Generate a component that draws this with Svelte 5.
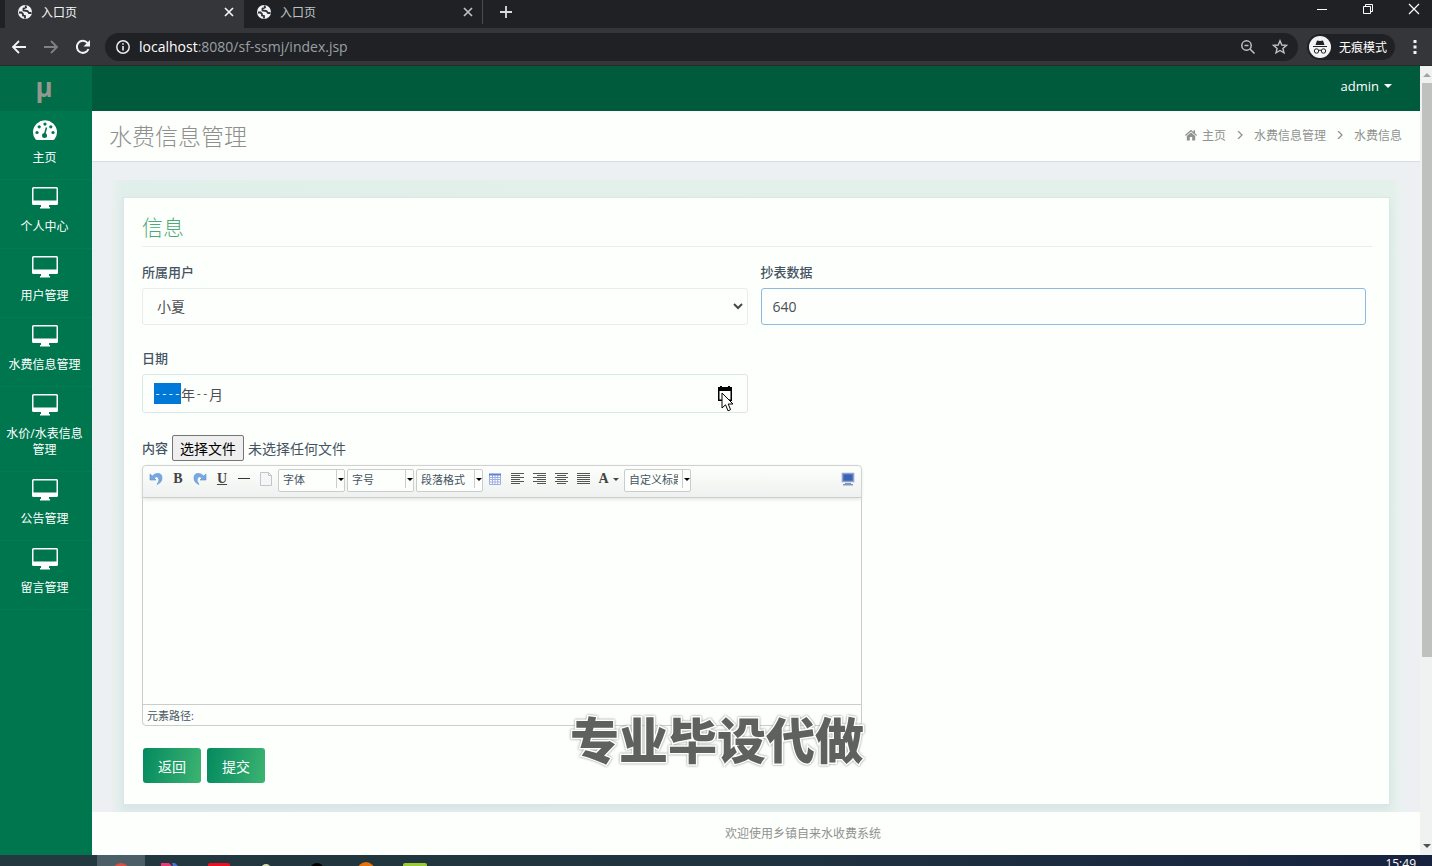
<script lang="ts">
  const tabs = [
    { title: '入口页', active: true },
    { title: '入口页', active: false }
  ];

  const menu = [
    { label: '主页', icon: 'gauge' },
    { label: '个人中心', icon: 'desktop' },
    { label: '用户管理', icon: 'desktop' },
    { label: '水费信息管理', icon: 'desktop' },
    { label: '水价/水表信息管理', icon: 'desktop' },
    { label: '公告管理', icon: 'desktop' },
    { label: '留言管理', icon: 'desktop' }
  ];

  const combos = ['字体', '字号', '段落格式'];

  // line ends of the four alignment icons
  const aligns = [
    { name: '左对齐', d: 'M1 1.500h13M1 3.500h9M1 5.500h13M1 7.500h9M1 9.500h13M1 11.500h9' },
    { name: '右对齐', d: 'M1 1.500h13M5 3.500h9M1 5.500h13M5 7.500h9M1 9.500h13M5 11.500h9' },
    { name: '居中', d: 'M1 1.500h13M3 3.500h9M1 5.500h13M3 7.500h9M1 9.500h13M3 11.500h9' },
    { name: '两端对齐', d: 'M1 1.500h13M1 3.500h13M1 5.500h13M1 7.500h13M1 9.500h13M1 11.500h13' }
  ];

  let reading = '640';
  let year = '----';
  let month = '--';
  let content = '';
  let fileName = '未选择任何文件';
  let fileInput: HTMLInputElement;

  const handleFile = () => {
    fileName = fileInput.files?.[0]?.name ?? '未选择任何文件';
  };
</script>

<div class="screen">
  <div class="tabstrip">
    {#each tabs as tab}
      <div class="tab" class:tab--active={tab.active}>
        <svg width="16" height="16" viewBox="0 0 16 16">
          <circle cx="8" cy="8" r="7" fill="#f1f3f4" />
          <path d="M2 8.500 4.500 8.500 6 10v1.500l2 .5v2.500M8.500 1.500 9 3.500 6.500 4.500v2l4 .5 1.500 2h2.500" fill="none" stroke="#303134" stroke-width="1.800" />
        </svg>
        <span class="tab-title">{tab.title}</span>
        <button class="plain" aria-label="关闭标签页">
          <svg width="10" height="10" viewBox="0 0 10 10"><path d="M1 1l8 8M9 1l-8 8" stroke="currentColor" stroke-width="1.700" /></svg>
        </button>
      </div>
    {/each}
    <button class="plain new-tab" aria-label="新标签页">
      <svg width="12" height="12" viewBox="0 0 12 12"><path d="M6 0v12M0 6h12" stroke="#dadce0" stroke-width="1.800" /></svg>
    </button>
    <div class="window-controls">
      <button class="plain" aria-label="最小化">
        <svg width="12" height="12" viewBox="0 0 12 12"><path d="M1 6.500h10" stroke="#fff" /></svg>
      </button>
      <button class="plain" aria-label="还原">
        <svg width="12" height="12" viewBox="0 0 12 12"><path d="M1.500 3.500h7v7h-7zM3.500 3.500v-2h7v7h-2" fill="none" stroke="#fff" /></svg>
      </button>
      <button class="plain" aria-label="关闭">
        <svg width="12" height="12" viewBox="0 0 12 12"><path d="M1 1l10 10M11 1 1 11" stroke="#fff" stroke-width="1.200" /></svg>
      </button>
    </div>
  </div>

  <div class="navbar">
    <button class="plain nav-button" aria-label="后退">
      <svg width="16" height="16" viewBox="0 0 16 16"><path d="M15 8H2M8 2 2 8l6 6" fill="none" stroke="#f1f3f4" stroke-width="1.800" /></svg>
    </button>
    <button class="plain nav-button" aria-label="前进">
      <svg width="16" height="16" viewBox="0 0 16 16"><path d="M1 8h13M8 2l6 6-6 6" fill="none" stroke="#808185" stroke-width="1.800" /></svg>
    </button>
    <button class="plain nav-button" aria-label="重新加载">
      <svg width="16" height="16" viewBox="0 0 16 16"><path d="M13.500 10A6 6 0 1 1 12.500 4" fill="none" stroke="#f1f3f4" stroke-width="2" /><path d="M15 1v6.500H8.500z" fill="#f1f3f4" /></svg>
    </button>
    <div class="omnibox">
      <svg width="16" height="16" viewBox="0 0 16 16"><circle cx="8" cy="8" r="6.200" fill="none" stroke="#e8eaed" stroke-width="1.500" /><path d="M8 7v4.500M8 4.200v1.600" stroke="#e8eaed" stroke-width="1.600" /></svg>
      <span class="url"><b>localhost</b>:8080/sf-ssmj/index.jsp</span>
      <svg width="16" height="16" viewBox="0 0 16 16"><circle cx="6.500" cy="6.500" r="4.700" fill="none" stroke="#bdc1c6" stroke-width="1.500" /><path d="M4.500 6.500h4M10 10l4.500 4.500" stroke="#bdc1c6" stroke-width="1.500" /></svg>
      <svg width="16" height="16" viewBox="0 0 16 16"><path d="M8 1.800 9.800 6l4.600.4-3.500 3 1.100 4.500L8 11.500 4 13.900l1.100-4.500-3.500-3L6.200 6z" fill="none" stroke="#bdc1c6" stroke-width="1.400" /></svg>
    </div>
    <div class="incognito">
      <svg width="22" height="22" viewBox="0 0 22 22">
        <circle cx="11" cy="11" r="11" fill="#f1f3f4" />
        <path d="M8 4.500 11 5l3-.5 1.500 4.500h-9zM4 10h14v1H4z" fill="#202124" />
        <path d="M9.500 14.500q1.500-1 3 0" fill="none" stroke="#202124" />
        <circle cx="7.500" cy="15" r="2.200" fill="none" stroke="#202124" /><circle cx="14.500" cy="15" r="2.200" fill="none" stroke="#202124" />
      </svg>
      <span>无痕模式</span>
    </div>
    <button class="plain more" aria-label="更多">
      <svg width="4" height="14" viewBox="0 0 4 14"><path d="M.5 0h3v3h-3zM.5 5.500h3v3h-3zM.5 11h3v3h-3z" fill="#f1f3f4" /></svg>
    </button>
  </div>

  <div class="page">
    <nav class="sidebar">
      <a class="brand" href="#home">µ</a>
      {#each menu as item}
        <a class="menu-item" href="#menu">
          {#if item.icon === 'gauge'}
            <svg width="26" height="22" viewBox="0 0 26 22">
              <path d="M3.500 21.300A12 11.800 0 1 1 22.500 21.300Q22 22 21 22H5Q4 22 3.500 21.300z" fill="#fff" />
              <circle cx="5" cy="14.500" r="1.600" fill="#00764f" /><circle cx="7.200" cy="8.800" r="1.600" fill="#00764f" /><circle cx="13" cy="6.100" r="1.600" fill="#00764f" />
              <circle cx="18.800" cy="8.800" r="1.600" fill="#00764f" /><circle cx="21" cy="14.500" r="1.600" fill="#00764f" /><circle cx="12.500" cy="17.500" r="2.500" fill="#00764f" />
              <path d="M12.500 16.500 14.500 9.500" stroke="#00764f" stroke-width="1.500" />
            </svg>
          {:else}
            <svg width="26" height="22" viewBox="0 0 26 22">
              <path fill-rule="evenodd" d="M1.500 0h23Q26 0 26 1.500v15Q26 18 24.500 18H17v2h1v1.500H8V20h1v-2H1.500Q0 18 0 16.500v-15Q0 0 1.500 0zM1.500 1.500v12h23v-12z" fill="#fff" />
            </svg>
          {/if}
          <span>{item.label}</span>
        </a>
      {/each}
    </nav>

    <div class="main">
      <header class="topbar">
        <button class="plain user">admin <i class="caret"></i></button>
      </header>

      <div class="title-bar">
        <h1>水费信息管理</h1>
        <div class="breadcrumb">
          <a href="#home">
            <svg width="12" height="12" viewBox="0 0 12 12"><path d="M6 .8 0 6l.8.9L6 2.500l5.200 4.400.8-.9-2-1.700V1.200H8.500V3zM6 3.500 1.800 7v4.500h3V8h2.400v3.500h3V7z" fill="#8f928f" /></svg>
            主页
          </a>
          <svg width="6" height="8" viewBox="0 0 6 8"><path d="M1 0l4 4-4 4" fill="none" stroke="#8f928f" stroke-width="1.300" /></svg>
          <a href="#list">水费信息管理</a>
          <svg width="6" height="8" viewBox="0 0 6 8"><path d="M1 0l4 4-4 4" fill="none" stroke="#8f928f" stroke-width="1.300" /></svg>
          <span>水费信息</span>
        </div>
      </div>

      <div class="content">
        <div class="card">
          <h2>信息</h2>
          <form on:submit|preventDefault>
            <div class="form-grid">
              <div class="field">
                <label for="owner">所属用户</label>
                <div class="select-box">
                  <select id="owner" class="control"><option>小夏</option></select>
                  <svg width="10" height="7" viewBox="0 0 10 7"><path d="M1 1l4 4 4-4" fill="none" stroke="#45484b" stroke-width="2" /></svg>
                </div>
              </div>
              <div class="field">
                <label for="reading">抄表数据</label>
                <input id="reading" class="control control--focus" bind:value={reading} />
              </div>
              <div class="field">
                <label for="year">日期</label>
                <div class="control month">
                  <input id="year" class="segment segment--year" bind:value={year} />
                  <span>年</span>
                  <input class="segment segment--month" aria-label="月" bind:value={month} />
                  <span>月</span>
                  <button type="button" class="plain picker" aria-label="选择月份">
                    <svg width="14" height="16" viewBox="0 0 14 16"><path fill-rule="evenodd" d="M2 0h2v1h6V0h2v1h2v14H0V1h2zM1.500 5v8.500h11V5z" fill="#000" /></svg>
                    <svg class="pointer" width="14" height="20" viewBox="0 0 14 20"><path d="M1 1v15l3.500-3.200 2.500 6 2.600-1.100L7.200 12H12z" fill="#fff" stroke="#000" /></svg>
                  </button>
                </div>
              </div>
            </div>

            <div class="file-row">
              <label for="attachment">内容</label>
              <button type="button" class="file-button" on:click={() => fileInput.click()}>选择文件</button>
              <input id="attachment" type="file" hidden bind:this={fileInput} on:change={handleFile} />
              <span class="file-name">{fileName}</span>
            </div>

            <div class="editor">
              <div class="toolbar">
                <button type="button" class="tool" aria-label="撤销">
                  <svg width="14" height="14" viewBox="0 0 14 14"><path d="M1 2v6h6L5 6q3-2.500 4.500 0T8 12.500Q13 10.500 13 6T9 1.500Q6 1 3.200 4z" fill="#78a8e2" stroke="#5b8fd0" stroke-width=".6" /></svg>
                </button>
                <button type="button" class="tool tool--letter">B</button>
                <button type="button" class="tool" aria-label="重做">
                  <svg width="14" height="14" viewBox="0 0 14 14"><path d="M13 2v6H7l2-2q-3-2.500-4.500 0T6 12.500Q1 10.500 1 6T5 1.500Q8 1 10.800 4z" fill="#78a8e2" stroke="#5b8fd0" stroke-width=".6" /></svg>
                </button>
                <button type="button" class="tool tool--letter tool--underline">U</button>
                <button type="button" class="tool" aria-label="分隔线">
                  <svg width="14" height="14" viewBox="0 0 14 14"><path d="M1 6.500h12" stroke="#333" /></svg>
                </button>
                <button type="button" class="tool" aria-label="清空文档">
                  <svg width="14" height="14" viewBox="0 0 14 14"><path d="M1.500.5h8l3 3v10h-11zM9.500.5v3h3" fill="#f6f6f8" stroke="#c4c5cb" /></svg>
                </button>
                {#each combos as name}
                  <span class="combo">
                    <select aria-label={name}><option>{name}</option></select>
                    <i class="caret"></i>
                  </span>
                {/each}
                <button type="button" class="tool" aria-label="表格">
                  <svg width="14" height="14" viewBox="0 0 14 14"><path d="M1.500 2.500h11v10h-11zM1.500 5.500h11M1.500 7.500h11M1.500 10h11M4.500 3v10M7 3v10M9.700 3v10" fill="#fff" stroke="#9db0df" /><path d="M1 1.500h12v2H1z" fill="#5d81d3" /></svg>
                </button>
                {#each aligns as align}
                  <button type="button" class="tool" aria-label={align.name}>
                    <svg width="14" height="14" viewBox="0 0 14 14"><path d={align.d} stroke="#555" /></svg>
                  </button>
                {/each}
                <button type="button" class="tool tool--letter tool--color">A<i class="caret"></i></button>
                <span class="combo">
                  <select aria-label="自定义标题"><option>自定义标题</option></select>
                  <i class="caret"></i>
                </span>
                <button type="button" class="tool tool--right" aria-label="全屏">
                  <svg width="14" height="14" viewBox="0 0 14 14"><path d="M1.500 1.500h11v8h-11z" fill="#3c62b5" stroke="#8fa3cf" stroke-width="1.600" /><path d="M4 11h6v1h2v1.500H2V12h2z" fill="#8794b3" /></svg>
                </button>
              </div>
              <textarea aria-label="编辑内容" bind:value={content}></textarea>
              <div class="path">元素路径:</div>
            </div>

            <div class="actions">
              <button type="button" class="submit">返回</button>
              <button type="submit" class="submit">提交</button>
            </div>
          </form>
        </div>
      </div>

      <footer>欢迎使用乡镇自来水收费系统</footer>
    </div>

    <div class="scrollbar">
      <i class="arrow arrow--up"></i>
      <div class="thumb"></div>
      <i class="arrow"></i>
    </div>
  </div>

  <div class="taskbar">
    <div class="task-active"></div>
    <svg width="360" height="11" viewBox="0 0 360 11">
      <circle cx="24" cy="17" r="9" fill="#d94f43" />
      <path d="M64 8h8l3 3H64z" fill="#e83b76" /><path d="M75 8h3l3 3h-5z" fill="#4d6fd0" />
      <rect x="111" y="8" width="22" height="8" rx="2" fill="#f00f20" />
      <circle cx="169" cy="14" r="5" fill="#d9dcb0" />
      <circle cx="220" cy="15" r="7" fill="#000" />
      <circle cx="269" cy="16" r="9" fill="#e8720c" />
      <rect x="306" y="8" width="24" height="8" rx="2" fill="#9acb35" />
    </svg>
    <span class="clock">15:49</span>
  </div>

  <div class="watermark">专业毕设代做</div>
</div>

<style>
  :global(body) {
    background: #edf0f2;
  }

  .screen {
    position: relative;
    display: flex;
    flex-direction: column;
    min-height: 100vh;
    overflow: hidden;
    font-family: 'Open Sans', 'Noto Sans CJK SC', sans-serif;
    font-size: 14px;
    color: #455463;
  }

  .screen *,
  .screen {
    box-sizing: border-box;
  }

  svg {
    display: block;
    flex: none;
  }

  a {
    color: inherit;
    text-decoration: none;
  }

  button,
  input,
  select,
  textarea {
    font-family: inherit;
    color: inherit;
    margin: 0;
  }

  .plain {
    display: flex;
    align-items: center;
    justify-content: center;
    padding: 0;
    border: 0;
    background: none;
  }

  .caret {
    flex: none;
    border: 3px solid transparent;
    border-top-color: currentColor;
    border-bottom: 0;
  }

  /* browser frame */
  .tabstrip {
    display: flex;
    height: 28px;
    padding-left: 5px;
    background: #202124;
    font-size: 12px;
  }

  .tab {
    display: flex;
    align-items: center;
    gap: 8px;
    width: 239px;
    height: 24px;
    padding: 0 9px 0 12px;
    color: #bdc1c6;
    border-right: 1px solid #4a4c50;
  }

  .tab--active {
    height: 28px;
    padding-bottom: 4px;
    background: #35363a;
    border-right-color: #35363a;
    color: #f1f3f4;
  }

  .tab-title {
    flex: 1;
  }

  .new-tab {
    width: 46px;
    height: 24px;
  }

  .window-controls {
    display: flex;
    gap: 10px;
    height: 18px;
    margin-left: auto;
  }

  .window-controls button {
    width: 36px;
  }

  .navbar {
    display: flex;
    align-items: center;
    height: 38px;
    padding: 0 9px 0 3px;
    background: #35363a;
    border-bottom: 1px solid #292a2d;
  }

  .nav-button {
    width: 32px;
    height: 28px;
  }

  .omnibox {
    display: flex;
    flex: 1;
    align-items: center;
    gap: 16px;
    height: 28px;
    margin: 0 9px 0 6px;
    padding: 0 10px;
    border-radius: 14px;
    background: #202124;
  }

  .url {
    flex: 1;
    margin-left: -8px;
    color: #9aa0a6;
  }

  .url b {
    font-weight: 400;
    color: #fff;
  }

  .incognito {
    display: flex;
    align-items: center;
    gap: 8px;
    height: 26px;
    padding: 0 8px 0 2px;
    border-radius: 13px;
    background: #202124;
    color: #fff;
    font-size: 12px;
  }

  .more {
    width: 16px;
    height: 28px;
    margin-left: 12px;
  }

  /* site */
  .page {
    display: flex;
    flex: 1;
  }

  .sidebar {
    flex: none;
    width: 92px;
    background: #00764f;
    color: #fff;
    font-size: 12px;
    line-height: 16px;
    text-align: center;
  }

  .brand {
    display: flex;
    align-items: center;
    justify-content: center;
    height: 45px;
    padding: 0 4px 4px 0;
    background: #006c48;
    color: #93998f;
    font-size: 26px;
    font-weight: 700;
  }

  .menu-item {
    display: flex;
    flex-direction: column;
    align-items: center;
    gap: 10px;
    padding: 7px 7px 13px 4px;
    border-bottom: 1px solid #067a54;
  }

  .main {
    display: flex;
    flex: 1;
    flex-direction: column;
    min-width: 0;
  }

  .topbar {
    display: flex;
    justify-content: flex-end;
    height: 45px;
    padding: 0 28px 6px;
    background: #005a3c;
  }

  .user {
    gap: 5px;
    color: #fff;
    font-size: 13px;
  }

  .user .caret {
    border-width: 4px 4px 0;
  }

  .title-bar {
    display: flex;
    align-items: center;
    justify-content: space-between;
    height: 51px;
    padding: 0 18px 3px 17px;
    background: #fdfffc;
    border-bottom: 1px solid #d6dcdf;
  }

  h1 {
    margin: 0;
    color: #8d908e;
    font-size: 23px;
    font-weight: 300;
  }

  .breadcrumb {
    display: flex;
    align-items: center;
    gap: 11px;
    color: #8f928f;
    font-size: 12px;
  }

  .breadcrumb a {
    display: flex;
    align-items: center;
    gap: 5px;
  }

  .content {
    flex: 1;
    margin: 18px 18px 0 17px;
    padding: 17px 12px 7px 14px;
    background: linear-gradient(90deg, #edf0f2, #e0efe9 14px, #e4f1ea 50%, #e4f1ea calc(100% - 8px), #edf0f2);
  }

  .card {
    padding: 14px 17px 21px 18px;
    border: 1px solid #dbe6ea;
    background: #fdfffc;
    box-shadow: 0 4px 8px #d8e2e7;
  }

  h2 {
    margin: 0 0 15px;
    padding-bottom: 4px;
    border-bottom: 1px solid #e7eeed;
    color: #49aa78;
    font-size: 21px;
    font-weight: 300;
    line-height: 30px;
  }

  .form-grid {
    display: grid;
    grid-template-columns: 1fr 1fr;
    gap: 23px 13px;
    padding-right: 6px;
  }

  .field {
    display: flex;
    flex-direction: column;
    gap: 6px;
  }

  label {
    font-size: 13px;
    font-weight: 500;
    line-height: 20px;
  }

  .control {
    width: 100%;
    height: 37px;
    padding: 0 11px;
    border: 1px solid #e3eeed;
    border-radius: 3px;
    outline: 0;
    background: #fdfffc;
    color: #4b4f54;
    font-size: 14px;
  }

  .control--focus {
    border-color: #8db9e3;
  }

  .select-box {
    position: relative;
  }

  .select-box select {
    display: block;
    padding-left: 14px;
    appearance: none;
  }

  .select-box svg {
    position: absolute;
    top: 15px;
    right: 5px;
    pointer-events: none;
  }

  .month {
    display: flex;
    align-items: center;
    height: 39px;
    border-color: #d9e8e8;
  }

  .segment {
    padding: 0;
    border: 0;
    outline: 0;
    background: none;
    font-family: 'Liberation Mono', monospace;
    font-size: 11px;
    text-align: center;
  }

  .segment--year {
    width: 27px;
    height: 21px;
    background: #0078d7;
    color: #fff;
  }

  .segment--month {
    width: 14px;
  }

  .picker {
    position: relative;
    margin-left: auto;
    margin-right: 4px;
  }

  .pointer {
    position: absolute;
    top: 6px;
    left: 3px;
  }

  .file-row {
    display: flex;
    align-items: center;
    gap: 4px;
    margin-top: 22px;
  }

  .file-button {
    height: 26px;
    padding: 0 7px;
    border: 1px solid #767676;
    border-radius: 2px;
    background: #efefef;
    color: #000;
    font-size: 14px;
  }

  .editor {
    max-width: 720px;
    margin-top: 4px;
    border: 1px solid #ccc;
    border-radius: 4px;
    font-size: 11px;
  }

  .toolbar {
    display: flex;
    gap: 2px;
    height: 32px;
    padding: 3px 3px 0;
    border-bottom: 1px solid #ccc;
    border-radius: 4px 4px 0 0;
    background: linear-gradient(#fdfffc, #eff1f0);
    box-shadow: 0 1px 4px #ddd;
  }

  .tool {
    display: flex;
    align-items: center;
    justify-content: center;
    width: 20px;
    height: 20px;
    padding: 0;
    border: 0;
    background: none;
  }

  .tool--letter {
    color: #444;
    font-family: 'Liberation Serif', serif;
    font-size: 14px;
    font-weight: 700;
  }

  .tool--underline {
    text-decoration: underline;
  }

  .tool--color {
    gap: 4px;
    width: 27px;
  }

  .tool--right {
    margin-left: auto;
  }

  .combo {
    position: relative;
    width: 67px;
    height: 23px;
  }

  .combo select {
    width: 100%;
    height: 100%;
    padding: 0 12px 2px 4px;
    border: 1px solid #ccc;
    border-radius: 2px;
    background: #fdfffc;
    font-size: 11px;
    appearance: none;
  }

  .combo::after {
    content: '';
    position: absolute;
    top: 1px;
    right: 8px;
    width: 1px;
    height: 18px;
    background: #ccc;
  }

  .combo .caret {
    position: absolute;
    top: 9px;
    right: 1px;
    color: #000;
  }

  textarea {
    display: block;
    width: 100%;
    height: 206px;
    border: 0;
    outline: 0;
    background: none;
    resize: none;
  }

  .path {
    height: 21px;
    padding-left: 4px;
    border-top: 1px solid #ccc;
    line-height: 21px;
  }

  .actions {
    display: flex;
    gap: 6px;
    margin-top: 22px;
    padding-left: 1px;
  }

  .submit {
    height: 35px;
    padding: 0 15px;
    border: 0;
    border-radius: 3px;
    background: linear-gradient(100deg, #048a60, #3cb371);
    color: #fff;
    font-size: 14px;
  }

  footer {
    position: relative;
    height: 43px;
    padding-left: 94px;
    background: #fdfffc;
    color: #8f928f;
    font-size: 12px;
    line-height: 43px;
    text-align: center;
  }

  .scrollbar {
    display: flex;
    flex: none;
    flex-direction: column;
    align-items: flex-end;
    width: 12px;
    padding: 7px 0;
    background: #f0f2f1;
  }

  .thumb {
    width: 10px;
    height: 74%;
    margin: 6px 0 auto;
    background: #bfc1bf;
  }

  .arrow {
    margin-right: 1px;
    border: 4px solid transparent;
    border-top-color: #505050;
    border-bottom: 0;
  }

  .arrow--up {
    border: 4px solid transparent;
    border-top: 0;
    border-bottom-color: #a3a3a3;
  }

  .taskbar {
    display: flex;
    height: 11px;
    overflow: hidden;
    background: linear-gradient(90deg, #23383f, #20343f 50%, #17223f);
  }

  .task-active {
    width: 48px;
    margin: 0 -48px 0 97px;
    background: #4c5e66;
  }

  .clock {
    margin: 0 16px 0 auto;
    color: #fff;
    font-size: 12px;
  }

  .watermark {
    position: absolute;
    left: 570px;
    bottom: 90px;
    color: #5f615f;
    font-size: 49px;
    font-weight: 900;
    line-height: 72px;
    white-space: nowrap;
    paint-order: stroke;
    -webkit-text-stroke: 3px #fdfffc;
    filter: drop-shadow(0 0 1px #888);
    pointer-events: none;
  }
</style>
